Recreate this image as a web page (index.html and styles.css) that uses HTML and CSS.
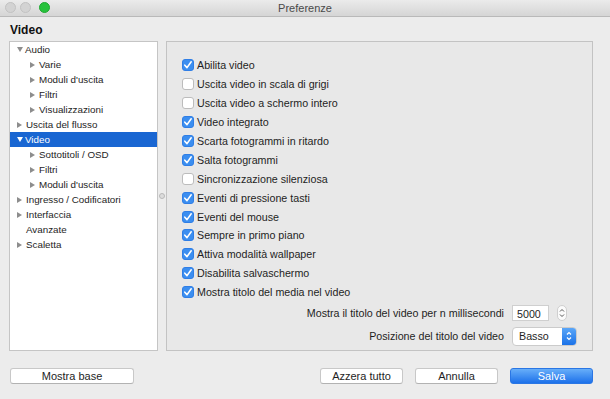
FILE: index.html
```html
<!doctype html>
<html lang="it">
<head>
    <meta charset="utf-8">
    <title>Preferenze</title>
    <link rel="stylesheet" href="styles.css">
</head>
<body>
    <div class="window">
        <div class="titlebar">
            <div class="lights">
                <span class="light"></span>
                <span class="light"></span>
                <span class="light green"></span>
            </div>
            <span class="title">Preferenze</span>
        </div>
        <div class="heading">Video</div>
        <div class="main">
            <ul class="tree">
                <li class="node open"><span class="arrow"></span>Audio</li>
                <li class="node sub"><span class="arrow"></span>Varie</li>
                <li class="node sub"><span class="arrow"></span>Moduli d'uscita</li>
                <li class="node sub"><span class="arrow"></span>Filtri</li>
                <li class="node sub"><span class="arrow"></span>Visualizzazioni</li>
                <li class="node"><span class="arrow"></span>Uscita del flusso</li>
                <li class="node open selected"><span class="arrow"></span>Video</li>
                <li class="node sub"><span class="arrow"></span>Sottotitoli / OSD</li>
                <li class="node sub"><span class="arrow"></span>Filtri</li>
                <li class="node sub"><span class="arrow"></span>Moduli d'uscita</li>
                <li class="node"><span class="arrow"></span>Ingresso / Codificatori</li>
                <li class="node"><span class="arrow"></span>Interfaccia</li>
                <li class="node leaf"><span class="arrow"></span>Avanzate</li>
                <li class="node"><span class="arrow"></span>Scaletta</li>
            </ul>
            <div class="splitter"><span class="knob"></span></div>
            <div class="panel">
                <div class="checks">
                    <label class="check on"><span class="box"></span>Abilita video</label>
                    <label class="check"><span class="box"></span>Uscita video in scala di grigi</label>
                    <label class="check"><span class="box"></span>Uscita video a schermo intero</label>
                    <label class="check on"><span class="box"></span>Video integrato</label>
                    <label class="check on"><span class="box"></span>Scarta fotogrammi in ritardo</label>
                    <label class="check on"><span class="box"></span>Salta fotogrammi</label>
                    <label class="check"><span class="box"></span>Sincronizzazione silenziosa</label>
                    <label class="check on"><span class="box"></span>Eventi di pressione tasti</label>
                    <label class="check on"><span class="box"></span>Eventi del mouse</label>
                    <label class="check on"><span class="box"></span>Sempre in primo piano</label>
                    <label class="check on"><span class="box"></span>Attiva modalità wallpaper</label>
                    <label class="check on"><span class="box"></span>Disabilita salvaschermo</label>
                    <label class="check on"><span class="box"></span>Mostra titolo del media nel video</label>
                </div>
                <div class="field">
                    <span class="field-label">Mostra il titolo del video per n millisecondi</span>
                    <div class="control">
                        <span class="number">5000</span>
                        <span class="stepper">
                            <svg width="8" height="14" viewBox="0 0 8 14">
                                <path d="M2 5.5 L4 3.5 L6 5.5 M2 8.5 L4 10.5 L6 8.5" fill="none" stroke="#555" stroke-width="1"/>
                            </svg>
                        </span>
                    </div>
                </div>
                <div class="field">
                    <span class="field-label">Posizione del titolo del video</span>
                    <div class="control">
                        <span class="select">Basso
                            <span class="select-cap">
                                <svg width="8" height="14" viewBox="0 0 8 14">
                                    <path d="M2 5.5 L4 3.5 L6 5.5 M2 8.5 L4 10.5 L6 8.5" fill="none" stroke="#fff" stroke-width="1.2"/>
                                </svg>
                            </span>
                        </span>
                    </div>
                </div>
            </div>
        </div>
        <div class="footer">
            <button class="btn wide">Mostra base</button>
            <div class="actions">
                <button class="btn">Azzera tutto</button>
                <button class="btn">Annulla</button>
                <button class="btn primary">Salva</button>
            </div>
        </div>
    </div>
</body>
</html>
```

FILE: styles.css
```css
body {
    margin: 0;
    font-family: "Liberation Sans", Arial, sans-serif;
    font-size: 11px;
    color: #1e1e1e;
    background: #ececec;
}

.window {
    width: 610px;
    height: 399px;
    display: flex;
    flex-direction: column;
    background: #ececec;
}

.titlebar {
    height: 17px;
    display: flex;
    align-items: center;
    justify-content: center;
    position: relative;
    background: linear-gradient(#ebebeb, #d5d5d5);
    border-bottom: 1px solid #b9b9b9;
    box-sizing: border-box;
}

.lights {
    position: absolute;
    left: 5px;
    top: 2px;
    display: flex;
    gap: 4px;
}

.light {
    width: 11px;
    height: 11px;
    border-radius: 50%;
    background: #d3d3d3;
    border: 1px solid #c2c2c2;
    box-sizing: border-box;
}

.light.green {
    background: #27c23c;
    border-color: #1fa831;
    margin-left: 4px;
}

.title {
    font-size: 11px;
    color: #4a4a4a;
}

.heading {
    height: 24px;
    padding-left: 10px;
    font-size: 12px;
    font-weight: bold;
    line-height: 26px;
    color: #111;
}

.main {
    height: 310px;
    display: flex;
    padding-left: 9px;
}

.tree {
    width: 149px;
    margin: 0;
    padding: 0;
    list-style: none;
    background: #fff;
    border: 1px solid #c5c5c5;
    box-sizing: border-box;
    font-size: 9.8px;
}

.node {
    height: 15px;
    line-height: 15px;
    display: flex;
    align-items: center;
    padding-left: 7px;
    white-space: nowrap;
}

.node.sub {
    padding-left: 20px;
}

.arrow {
    width: 0;
    height: 0;
    border-top: 3.5px solid transparent;
    border-bottom: 3.5px solid transparent;
    border-left: 5px solid #8d8d8d;
    margin-right: 4px;
}

.node.open .arrow {
    border-left: 3.5px solid transparent;
    border-right: 3.5px solid transparent;
    border-top: 5px solid #8d8d8d;
    border-bottom: 0;
    margin-right: 2px;
}

.node.leaf .arrow {
    border-color: transparent;
}

.node.selected {
    background: #1966d2;
    color: #fff;
}

.node.selected .arrow {
    border-top-color: #fff;
}

.splitter {
    width: 8px;
    display: flex;
    align-items: center;
    justify-content: center;
}

.knob {
    width: 4px;
    height: 4px;
    border-radius: 50%;
    border: 1px solid #b8b8b8;
    background: #dcdcdc;
}

.panel {
    width: 427px;
    background: #e8e8e8;
    border: 1px solid #c3c3c3;
    box-sizing: border-box;
    padding: 14px 15px 0 15px;
    font-size: 10.7px;
}

.checks {
    display: flex;
    flex-direction: column;
}

.check {
    height: 18.9px;
    display: flex;
    align-items: center;
    white-space: nowrap;
}

.box {
    width: 12px;
    height: 12px;
    margin-right: 3px;
    border-radius: 3px;
    background: #fff;
    border: 1px solid #bcbcbc;
    box-sizing: border-box;
}

.check.on .box {
    border-color: #2f7ee6;
    background: #3b8ef0 url("data:image/svg+xml;utf8,<svg xmlns='http://www.w3.org/2000/svg' width='12' height='12' viewBox='0 0 12 12'><path d='M2.8 6.2 L5 8.6 L9.2 2.8' fill='none' stroke='white' stroke-width='1.6' stroke-linecap='round' stroke-linejoin='round'/></svg>") center / 12px 12px no-repeat;
}

.field {
    height: 23px;
    display: flex;
    align-items: center;
    justify-content: flex-end;
}

.field-label {
    margin-right: 8px;
}

.control {
    width: 65px;
    display: flex;
    align-items: center;
}

.number {
    width: 37px;
    height: 16px;
    line-height: 16px;
    padding-left: 4px;
    box-sizing: border-box;
    background: #fff;
    border: 1px solid #cfcfcf;
}

.stepper {
    width: 10px;
    height: 16px;
    margin-left: 8px;
    display: flex;
    align-items: center;
    justify-content: center;
    border-radius: 5px;
    background: #fbfbfb;
    border: 1px solid #cfcfcf;
    box-sizing: border-box;
}

.select {
    width: 65px;
    height: 19px;
    display: flex;
    align-items: center;
    justify-content: space-between;
    padding-left: 6px;
    box-sizing: border-box;
    background: #fff;
    border: 1px solid #cbcbcb;
    border-radius: 4px;
}

.select-cap {
    width: 14px;
    height: 17px;
    display: flex;
    align-items: center;
    justify-content: center;
    border-radius: 0 3px 3px 0;
    background: linear-gradient(#5aa6f8, #1b72e8);
}

.footer {
    flex: 1;
    display: flex;
    align-items: flex-start;
    justify-content: space-between;
    padding: 17px 17px 0 10px;
}

.btn {
    width: 83px;
    height: 16px;
    padding: 0;
    font-family: "Liberation Sans", Arial, sans-serif;
    font-size: 11px;
    color: #1e1e1e;
    background: #fff;
    border: 1px solid #c8c8c8;
    border-bottom-color: #b2b2b2;
    border-radius: 3px;
}

.btn.wide {
    width: 124px;
}

.actions {
    display: flex;
    gap: 12px;
}

.btn.primary {
    color: #fff;
    border-color: #2a76e4;
    background: linear-gradient(#67aef9, #1d71ea);
}
```
